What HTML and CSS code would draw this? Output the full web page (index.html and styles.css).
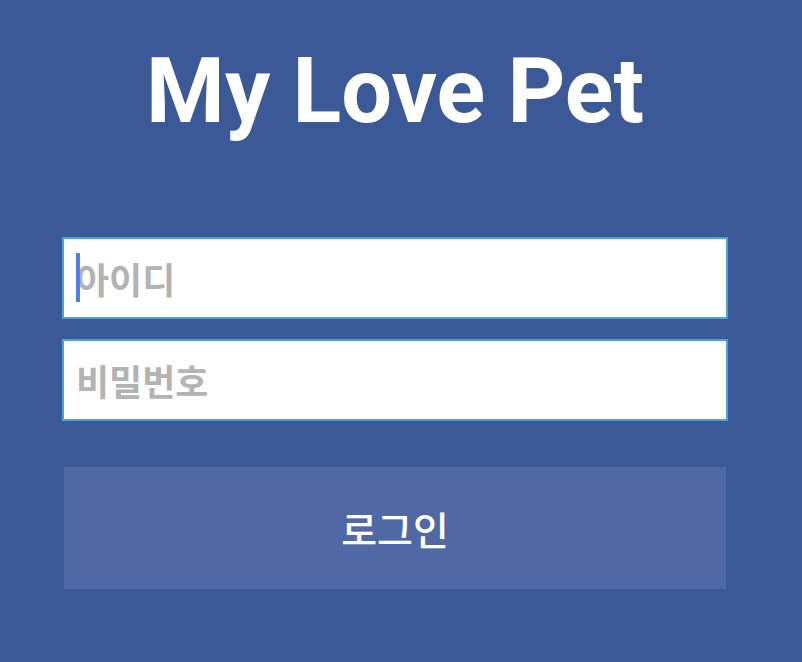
FILE: index.html
```html
<!DOCTYPE html>
<html lang="ko">
<head>
<meta charset="utf-8">
<link rel="stylesheet" href="styles.css">
</head>
<body>
<main class="page">
  <h1 class="title">My Love Pet</h1>
  <form class="form">
    <div class="field">
      <input class="input" type="text" placeholder="아이디">
      <span class="caret"></span>
    </div>
    <div class="field">
      <input class="input" type="password" placeholder="비밀번호">
    </div>
    <button class="btn" type="button">로그인</button>
  </form>
</main>
</body>
</html>
```
FILE: styles.css
```css
html, body {
  margin: 0;
  padding: 0;
  background: #3b5897;
  height: 100%;
}
.page {
  width: 666px;
  margin-left: 62px;
  font-family: Roboto, "Noto Sans CJK KR", sans-serif;
}
.title {
  margin: 0;
  padding-top: 42px;
  height: 237px;
  box-sizing: border-box;
  font-size: 90px;
  font-weight: 700;
  line-height: 100px;
  color: #ffffff;
  text-align: center;
}
.form {
  display: flex;
  flex-direction: column;
  gap: 20px;
}
.field {
  position: relative;
}
.input {
  display: block;
  width: 100%;
  height: 82px;
  box-sizing: border-box;
  border: 2px solid #4aa3d8;
  background: #fff;
  padding: 0 12px;
  font-family: "Noto Sans CJK KR", sans-serif;
  font-size: 36px;
  font-weight: 700;
  color: #333;
  outline: none;
}
.input::placeholder {
  color: #b3b3b3;
}
.caret {
  position: absolute;
  left: 14px;
  top: 16px;
  width: 4px;
  height: 49px;
  background: #4a7ff5;
}
.btn {
  margin: 26px 2px 0;
  height: 122px;
  border: none;
  background: #5068a4;
  color: #fff;
  font-family: "Noto Sans CJK KR", sans-serif;
  font-size: 39px;
  font-weight: 500;
  cursor: pointer;
}
```
